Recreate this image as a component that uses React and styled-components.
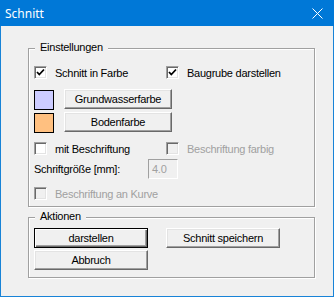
import React from 'react';
import styled, { createGlobalStyle } from 'styled-components';

const GlobalStyle = createGlobalStyle`
	html, body {
		margin: 0;
		padding: 0;
		background: #f0f0f0;
	}
	* {
		box-sizing: border-box;
	}
`;

const Window = styled.div`
	width: 334px;
	height: 297px;
	display: flex;
	flex-direction: column;
	background: #f0f0f0;
	border: 1px solid #1883d7;
	border-top: none;
	font-family: 'Liberation Sans', Arial, sans-serif;
	font-size: 11px;
	letter-spacing: -0.25px;
	color: #000;
`;

const TitleBar = styled.div`
	height: 26px;
	margin: 0 -1px;
	padding: 0 11px 0 5px;
	display: flex;
	align-items: center;
	justify-content: space-between;
	background: #0078d7;
	color: #fff;
	font-family: 'Noto Sans', 'Open Sans', sans-serif;
	font-size: 12px;
	letter-spacing: 0;
`;

const Content = styled.div`
	padding: 22px 0 0 27px;
	display: flex;
	flex-direction: column;
`;

const Group = styled.div`
	position: relative;
	width: 287px;
	height: ${(p) => p.$h}px;
	margin-top: ${(p) => p.$mt || 0}px;
	padding: ${(p) => p.$pt}px 0 0 5px;
	border: 1px solid #a0a0a0;
	box-shadow: inset 1px 1px 0 #fff, 1px 1px 0 #fff;
`;

const Legend = styled.span`
	position: absolute;
	top: -8px;
	left: 6px;
	padding: 0 5px;
	line-height: 13px;
	background: #f0f0f0;
`;

const Grid = styled.div`
	display: grid;
	grid-template-columns: 132px auto;
	align-items: center;
	row-gap: ${(p) => p.$gap || 0}px;
`;

const CheckRow = styled.label`
	display: flex;
	align-items: center;
	height: 13px;
	gap: 8px;
	margin-top: ${(p) => p.$mt || 0}px;
	color: ${(p) => (p.$disabled ? '#a0a0a0' : '#000')};
	white-space: nowrap;
`;

const Box = styled.span`
	width: 13px;
	height: 13px;
	display: flex;
	align-items: center;
	justify-content: center;
	background: ${(p) => (p.$disabled ? '#f0f0f0' : '#fff')};
	border-style: solid;
	border-width: 1px;
	border-color: #a0a0a0 #fff #fff #a0a0a0;
	box-shadow: inset 1px 1px 0 #696969, inset -1px -1px 0 #e3e3e3;
`;

const ColorRow = styled.div`
	display: flex;
	align-items: flex-start;
	gap: 10px;
	margin-top: ${(p) => p.$mt}px;
`;

const Swatch = styled.span`
	width: 20px;
	height: 20px;
	margin-top: 1px;
	border: 1px solid #000;
	background: ${(p) => p.$color};
`;

const Button = styled.button`
	width: ${(p) => p.$w}px;
	height: 20px;
	padding: 0;
	font: inherit;
	letter-spacing: inherit;
	color: #000;
	background: #f0f0f0;
	border: 1px solid;
	border-color: ${(p) => (p.$default ? '#000' : '#fff #696969 #696969 #fff')};
	box-shadow: ${(p) =>
		p.$default
			? 'inset 1px 1px 0 #fff, inset -1px -1px 0 #696969, inset -2px -2px 0 #a0a0a0'
			: 'inset -1px -1px 0 #a0a0a0, inset 1px 1px 0 #e3e3e3'};
`;

const FieldRow = styled.div`
	display: flex;
	align-items: center;
	height: 20px;
	margin-top: 4px;
`;

const FieldLabel = styled.span`
	width: 114px;
`;

const Input = styled.div`
	width: 30px;
	height: 20px;
	padding: 0 3px;
	display: flex;
	align-items: center;
	color: #a0a0a0;
	background: #f0f0f0;
	border-style: solid;
	border-width: 1px;
	border-color: #a0a0a0 #fff #fff #a0a0a0;
`;

const Check = () => (
	<svg width='9' height='9' viewBox='0 0 9 9'>
		<path d='M1 4 L3.3 6.5 L8 1.5' fill='none' stroke='#000' strokeWidth='1.8' />
	</svg>
);

const Checkbox = ({ checked, disabled, label, mt }) => (
	<CheckRow $disabled={disabled} $mt={mt}>
		<Box $disabled={disabled}>{checked && <Check />}</Box>
		{label}
	</CheckRow>
);

const App = () => (
	<>
		<GlobalStyle />
		<Window>
			<TitleBar>
				<span>Schnitt</span>
				<svg width='11' height='11' viewBox='0 0 11 11'>
					<path d='M0.5 0.5 L10.5 10.5 M10.5 0.5 L0.5 10.5' stroke='#fff' strokeWidth='1' />
				</svg>
			</TitleBar>
			<Content>
				<Group $h={159} $pt={17}>
					<Legend>Einstellungen</Legend>
					<Grid>
						<Checkbox checked label='Schnitt in Farbe' />
						<Checkbox checked label='Baugrube darstellen' />
					</Grid>
					<ColorRow $mt={10}>
						<Swatch $color='#ccccff' />
						<Button $w={108}>Grundwasserfarbe</Button>
					</ColorRow>
					<ColorRow $mt={2}>
						<Swatch $color='#ffc080' />
						<Button $w={108}>Bodenfarbe</Button>
					</ColorRow>
					<Grid>
						<Checkbox mt={9} label='mit Beschriftung' />
						<Checkbox mt={9} disabled label='Beschriftung farbig' />
					</Grid>
					<FieldRow>
						<FieldLabel>Schriftgröße [mm]:</FieldLabel>
						<Input>4.0</Input>
					</FieldRow>
					<Checkbox mt={8} disabled label='Beschriftung an Kurve' />
				</Group>
				<Group $h={61} $pt={10} $mt={10}>
					<Legend>Aktionen</Legend>
					<Grid $gap={2}>
						<Button $w={114} $default>darstellen</Button>
						<Button $w={114}>Schnitt speichern</Button>
						<Button $w={114}>Abbruch</Button>
					</Grid>
				</Group>
			</Content>
		</Window>
	</>
);

export default App;
